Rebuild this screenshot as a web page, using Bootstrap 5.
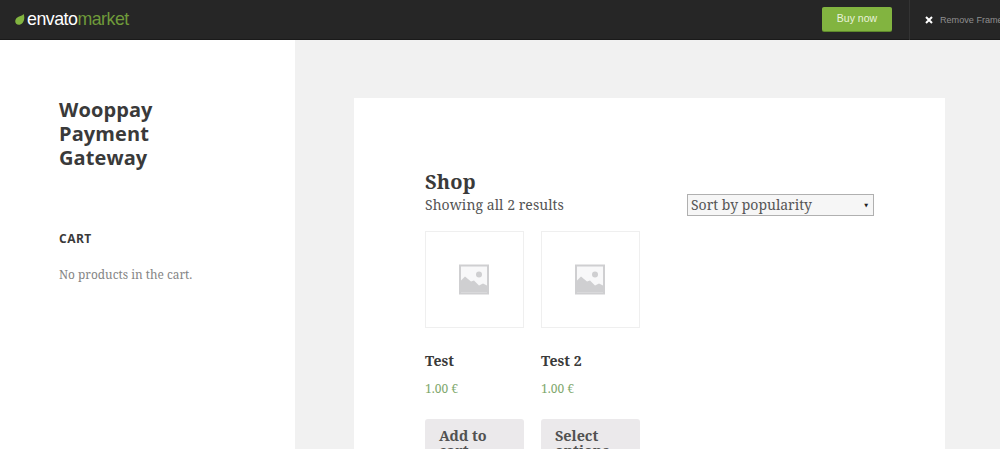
<!doctype html>
<html lang="en"><head><meta charset="utf-8"><title>Shop</title>
<link href="https://cdn.jsdelivr.net/npm/bootstrap@5.3.0/dist/css/bootstrap.min.css" rel="stylesheet">
<style>
html,body{height:449px;overflow:hidden}
body{background:#f1f1f1;font-family:"Noto Serif","DejaVu Serif",serif;color:#333}
.topbar{height:40px;background:#262626;border-bottom:1px solid #1a1a1a}
.logo-wrap{padding-left:15px;gap:2px;font-family:"Liberation Sans",sans-serif;font-size:17.8px;letter-spacing:-.5px;line-height:1}
.logo-a{color:#fff}.logo-b{color:#6f9a3a;font-weight:300}
.buy{width:70px;height:24px;background:#82b440;border-radius:2px;color:#e9f2dc;font:10.5px/23px "Liberation Sans",sans-serif;text-align:center;margin-right:17px;margin-bottom:1px;text-decoration:none;box-shadow:0 1px 0 #5f8a2c}
.remove{height:40px;width:91px;border-left:1px solid #333;padding-left:15px;gap:7px;font:9.1px "Liberation Sans",sans-serif;color:#8f8f8f;white-space:nowrap;overflow:hidden}
.side{width:295px;background:#fff;height:409px;padding:58px 59px 0}
.site-title{font:700 20px/24px "Open Sans",sans-serif;letter-spacing:.1px;color:#3a3a3a;margin:0 0 61px}
.cart-head{font:700 12px/16px "Open Sans",sans-serif;letter-spacing:.5px;color:#3a3a3a;margin:0 0 18px}
.cart-empty{font-size:11.9px;line-height:18px;color:#858585;margin:0}
.panel-wrap{padding:58px 55px 0 59px}
.panel{background:#fff;height:400px;padding:72px 71px 0}
.shop-title{font-size:20px;font-weight:700;line-height:24px;margin:0;letter-spacing:.2px;color:#3a3a3a}
.result{font-size:14px;line-height:22px;color:#555;letter-spacing:.05px}
.sort{width:187px;height:22px;border:1px solid #b0b0b0;background:#f6f6f6;font-size:14px;line-height:20px;padding:0 4px 0 3px;color:#555}
.caret-ico{font-size:5px;color:#222;margin-right:1px}
.products{gap:17px;margin-top:15px}
.prod{width:99px}
.thumb{height:97px;border:1px solid #efefef}
.thumb svg{margin-right:1px}
.prod-name{font-size:14px;font-weight:700;line-height:20px;margin:23px 0 0;color:#3a3a3a}
.price{font-size:12px;line-height:18px;color:#7fa86e;margin-top:9px}
.add{margin-top:21px;height:60px;background:#ebe9eb;color:#515151;font-size:14.4px;font-weight:700;line-height:15px;padding:9px 14px 0;border-radius:3px 3px 0 0}
</style></head><body>
<nav class="topbar d-flex align-items-center justify-content-between">
<div class="logo-wrap d-flex align-items-center">
<svg width="10" height="11" viewBox="0 0 9 10"><path d="M7.8 0C8.8 2.5 8.6 6 6.8 8.2 5.2 10 2.4 10.400 1 8.800-.4 7.200 0 4.900 1.700 3.300 3.400 1.800 6.500 1.800 7.800 0Z" fill="#82b440"/></svg>
<span><span class="logo-a">envato</span><span class="logo-b">market</span></span></div>
<div class="d-flex align-items-center">
<a class="buy" href="#">Buy now</a>
<div class="remove d-flex align-items-center"><svg width="8" height="8" viewBox="0 0 8 8" class="flex-shrink-0"><path d="M1 1L7 7M7 1L1 7" stroke="#fff" stroke-width="2"/></svg><span>Remove Frame</span></div>
</div></nav>
<div class="d-flex">
<aside class="side flex-shrink-0">
<h1 class="site-title">Wooppay Payment Gateway</h1>
<h2 class="cart-head">CART</h2>
<p class="cart-empty">No products in the cart.</p>
</aside>
<main class="panel-wrap flex-grow-1"><div class="panel">
<h2 class="shop-title">Shop</h2>
<div class="d-flex justify-content-between">
<div class="result">Showing all 2 results</div>
<div class="sort d-flex justify-content-between align-items-center"><span>Sort by popularity</span><span class="caret-ico">▼</span></div>
</div>
<div class="products d-flex">
<div class="prod"><div class="thumb d-flex align-items-center justify-content-center"><svg width="30" height="31" viewBox="0 0 30 30"><rect width="30" height="30" fill="#cfcfd1"/><rect x="2" y="2" width="26" height="26" fill="#f8f8f9"/><circle cx="20" cy="10" r="3" fill="#cfcfd1"/><path d="M2 28V16L6 12 12 17 15 16 20 21 24 19 28 21V28Z" fill="#cfcfd1"/></svg></div><div class="prod-name">Test</div><div class="price">1.00 €</div><div class="add">Add to cart</div></div>
<div class="prod"><div class="thumb d-flex align-items-center justify-content-center"><svg width="30" height="31" viewBox="0 0 30 30"><rect width="30" height="30" fill="#cfcfd1"/><rect x="2" y="2" width="26" height="26" fill="#f8f8f9"/><circle cx="20" cy="10" r="3" fill="#cfcfd1"/><path d="M2 28V16L6 12 12 17 15 16 20 21 24 19 28 21V28Z" fill="#cfcfd1"/></svg></div><div class="prod-name">Test 2</div><div class="price">1.00 €</div><div class="add">Select options</div></div>
</div>
</div></main></div>
<script src="https://cdn.jsdelivr.net/npm/bootstrap@5.3.0/dist/js/bootstrap.bundle.min.js"></script>
</body></html>
